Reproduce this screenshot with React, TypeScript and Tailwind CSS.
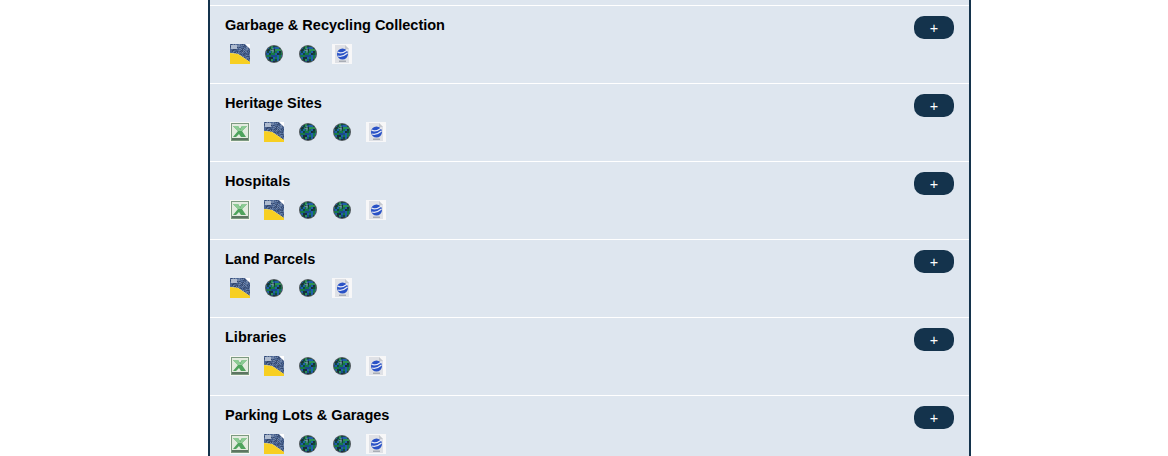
const ExcelIcon = () => (
  <svg width="20" height="20" viewBox="0 0 20 20">
    <rect width="20" height="20" fill="#f4f6f2" />
    <rect x="1.5" y="1.5" width="17" height="17" fill="#e3ebdf" stroke="#7c9a80" />
    <path d="M3 4h5l2 3 2-3h5l-5 5 4 6h-5l-2-3-3 3H3l5-6z" fill="#4fa35c" />
    <path d="M3 4h5l3 5H8zM12 4h5l-5 5h-2z" fill="#8ccb93" />
    <rect x="2" y="16" width="16" height="2" fill="#5d7561" />
  </svg>
);

// noisy cells, to read as the tiny raster thumbnails
const noise = (cols: number, rows: number, colors: string[]) => {
  const out: { x: number; y: number; c: string }[] = [];
  for (let y = 0; y < rows; y++) {
    for (let x = 0; x < cols; x++) {
      const h = Math.abs(Math.sin(x * 12.9898 + y * 78.233) * 43758.5453);
      out.push({ x, y, c: colors[Math.floor((h % 1) * colors.length)] });
    }
  }
  return out;
};

const shapeCells = noise(20, 20, ["#4a6390", "#3f5680", "#6f84a8", "#54709c", "#34486e"]);
const globeCells = noise(9, 9, ["#157a45", "#1f5fa8", "#0f4a3c", "#2a9153", "#1a4a8a", "#16303a"]);

const ShapeIcon = () => (
  <svg width="20" height="20" viewBox="0 0 20 20">
    <rect width="20" height="20" fill="#ffffff" />
    <clipPath id="shape-clip">
      <path d="M0 0h15l5 5v13L8 10 0 9z" />
    </clipPath>
    <g clipPath="url(#shape-clip)" shapeRendering="crispEdges">
      {shapeCells.map((c) => (
        <rect key={`${c.x}-${c.y}`} x={c.x} y={c.y} width="1" height="1" fill={c.c} />
      ))}
      <rect x="1" y="1" width="6" height="4" fill="#aebbcf" />
    </g>
    <path d="M0 9l8 1 12 8v2H0z" fill="#f7cf22" />
  </svg>
);

const GlobeIcon = () => (
  <svg width="20" height="20" viewBox="0 0 20 20">
    <clipPath id="globe-clip">
      <circle cx="10" cy="10" r="8" />
    </clipPath>
    <circle cx="10" cy="10" r="9" fill="#50585c" />
    <g clipPath="url(#globe-clip)" shapeRendering="crispEdges">
      {globeCells.map((c) => (
        <rect key={`${c.x}-${c.y}`} x={c.x * 2 + 1} y={c.y * 2 + 1} width="2" height="2" fill={c.c} />
      ))}
    </g>
    <path d="M6 6l4 1M9 4v5" stroke="#8fb4c8" strokeWidth="0.7" fill="none" />
  </svg>
);

const EarthIcon = () => (
  <svg width="20" height="20" viewBox="0 0 20 20">
    <rect width="20" height="20" fill="#f7f7f8" />
    <path d="M3 1h10l4 4v14H3z" fill="#dfe1e6" />
    <path d="M13 1l4 4h-4z" fill="#c4c7ce" />
    <circle cx="10.5" cy="10" r="5.5" fill="#2a52c6" />
    <path d="M5.5 8c3 2 6 1 10-2M6 12c3 1 6 0 9.5-3" stroke="#e6eaf5" strokeWidth="1.3" fill="none" />
    <path d="M7 16.5h7v1.5H7z" fill="#a9adb5" />
  </svg>
);

const icons = { x: ExcelIcon, s: ShapeIcon, g: GlobeIcon, e: EarthIcon };

const rows = [
  { name: "Garbage & Recycling Collection", set: ["s", "g", "g", "e"] },
  { name: "Heritage Sites", set: ["x", "s", "g", "g", "e"] },
  { name: "Hospitals", set: ["x", "s", "g", "g", "e"] },
  { name: "Land Parcels", set: ["s", "g", "g", "e"] },
  { name: "Libraries", set: ["x", "s", "g", "g", "e"] },
  { name: "Parking Lots & Garages", set: ["x", "s", "g", "g", "e"] },
] as const;

export default function App() {
  return (
    <div className="h-[456px] overflow-hidden bg-white font-['Liberation_Sans',Arial,sans-serif]">
      <div className="mx-[208px] w-[763px] h-full border-x-2 border-[#14334c] bg-[#dee6ef] pt-[5px]">
        {rows.map((row) => (
          <div key={row.name} className="h-[78px] border-t border-white px-[15px] pt-[10px] flex justify-between">
            <div>
              <div className="text-[14.5px] leading-[18px] font-bold text-black">{row.name}</div>
              <div className="mt-[10px] ml-[5px] flex gap-[14px]">
                {row.set.map((k, i) => {
                  const Icon = icons[k];
                  return <Icon key={i} />;
                })}
              </div>
            </div>
            <button className="w-[40px] h-[23px] rounded-[10px] bg-[#14334c] text-white text-[14.4px] leading-[25px] text-center">+</button>
          </div>
        ))}
      </div>
    </div>
  );
}
